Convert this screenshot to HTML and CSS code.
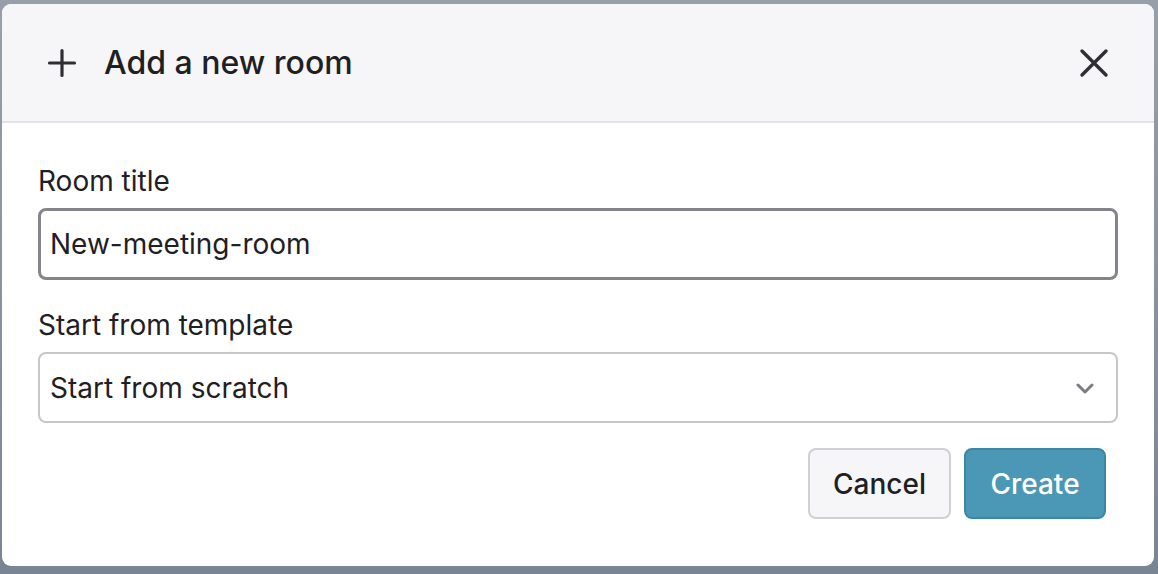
FILE: index.html
```html
<!DOCTYPE html>
<html lang="en">
<head>
<meta charset="utf-8">
<title>Add a new room</title>
<link rel="stylesheet" href="styles.css">
</head>
<body>
<div class="backdrop">
  <div class="modal">
    <div class="modal-header">
      <svg class="icon-plus" width="30" height="30" viewBox="0 0 30 30" aria-hidden="true">
        <path d="M15 2.5V27.5M2.5 15H27.5" fill="none" stroke="#2e2f33" stroke-width="3.2" stroke-linecap="round"/>
      </svg>
      <h1 class="modal-title">Add a new room</h1>
      <button class="close-btn" aria-label="Close">
        <svg width="30" height="30" viewBox="0 0 30 30" aria-hidden="true">
          <path d="M3 3L27 27M27 3L3 27" fill="none" stroke="#2e2f33" stroke-width="3.4" stroke-linecap="round"/>
        </svg>
      </button>
    </div>
    <div class="modal-body">
      <label class="field-label">Room title</label>
      <div class="input focused">New-meeting-room</div>
      <label class="field-label second">Start from template</label>
      <div class="input select">
        <span>Start from scratch</span>
        <svg class="chevron" width="18" height="11" viewBox="0 0 18 11" aria-hidden="true">
          <path d="M2 2L9 9L16 2" fill="none" stroke="#7c7c84" stroke-width="3" stroke-linecap="round" stroke-linejoin="round"/>
        </svg>
      </div>
      <div class="actions">
        <button class="btn btn-secondary">Cancel</button>
        <button class="btn btn-primary">Create</button>
      </div>
    </div>
  </div>
</div>
</body>
</html>
```

FILE: styles.css
```css
* { box-sizing: border-box; }
html, body { margin: 0; padding: 0; }
body {
  width: 1158px;
  height: 574px;
  overflow: hidden;
  font-family: Inter, "Noto Sans", "Liberation Sans", sans-serif;
  color: #1f2023;
}
.backdrop {
  width: 1158px;
  height: 574px;
  background: linear-gradient(180deg, #989fab 0%, #8a929e 50%, #7a8593 100%);
  padding: 4px 4px 8px 2px;
}
.modal {
  width: 1152px;
  height: 562px;
  background: #ffffff;
  border-radius: 9px;
  overflow: hidden;
  display: flex;
  flex-direction: column;
}
.modal-header {
  height: 119px;
  flex: 0 0 auto;
  background: #f6f6f8;
  border-bottom: 2px solid #e4e4e7;
  display: flex;
  align-items: center;
  padding: 0 45px 0 45px;
}
.icon-plus { flex: 0 0 auto; margin-top: 1px; }
.modal-title {
  margin: 0 0 0 27px;
  font-size: 32px;
  font-weight: 500;
  letter-spacing: 0;
  color: #1f2023;
  flex: 1 1 auto;
}
.close-btn {
  border: 0;
  background: none;
  padding: 0;
  width: 30px;
  height: 30px;
  display: flex;
}
.modal-body {
  padding: 41px 36px 0 36px;
  display: flex;
  flex-direction: column;
}
.field-label {
  display: block;
  font-size: 28px;
  line-height: 34px;
  color: #1f2023;
  margin-bottom: 10px;
}
.field-label.second { margin-top: 28px; }
.input {
  height: 72px;
  border: 2px solid #c7c7cb;
  border-radius: 8px;
  padding: 0 10px;
  display: flex;
  align-items: center;
  font-size: 28px;
  color: #1f2023;
}
.input.focused {
  border: 3px solid #84848b;
  padding-left: 9px;
}
.select { justify-content: space-between; padding-right: 22px; height: 71px; }
.chevron { flex: 0 0 auto; margin-top: 2px; }
.actions {
  display: flex;
  justify-content: flex-end;
  gap: 13px;
  margin-top: 25px;
  padding-right: 12px;
}
.btn {
  height: 71px;
  border-radius: 8px;
  font-family: inherit;
  font-size: 28px;
  font-weight: 500;
  padding: 0;
}
.btn-secondary {
  width: 143px;
  background: #f6f6f8;
  border: 2px solid #d0d0d4;
  color: #1f2023;
}
.btn-primary {
  width: 142px;
  background: #4a98b6;
  border: 2px solid #3d87a3;
  color: #ffffff;
}
```
